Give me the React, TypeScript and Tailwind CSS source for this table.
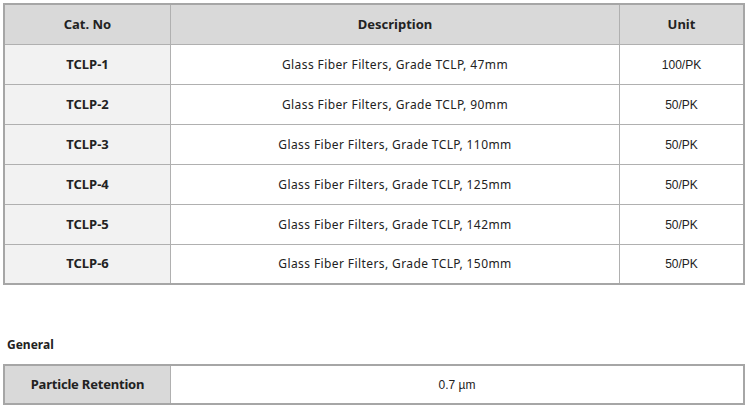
const rows = [
  { cat: "TCLP-1", desc: "Glass Fiber Filters, Grade TCLP, 47mm", unit: "100/PK" },
  { cat: "TCLP-2", desc: "Glass Fiber Filters, Grade TCLP, 90mm", unit: "50/PK" },
  { cat: "TCLP-3", desc: "Glass Fiber Filters, Grade TCLP, 110mm", unit: "50/PK" },
  { cat: "TCLP-4", desc: "Glass Fiber Filters, Grade TCLP, 125mm", unit: "50/PK" },
  { cat: "TCLP-5", desc: "Glass Fiber Filters, Grade TCLP, 142mm", unit: "50/PK" },
  { cat: "TCLP-6", desc: "Glass Fiber Filters, Grade TCLP, 150mm", unit: "50/PK" }
];

const font = "font-['Noto_Sans','Open_Sans',sans-serif]";
const arial = "font-['Liberation_Sans',Arial,sans-serif]";

export default function App() {
  return (
    <div className={`w-[748px] h-[408px] bg-white text-[#222] ${font}`}>
      <div className="pt-[3px] px-[3px]">
        <div className="border-2 border-[#a6a6a6]">
          <div className="flex h-[39px] bg-[#d9d9d9] text-[13px] font-bold">
            <div className="w-[165px] flex items-center justify-center">Cat. No</div>
            <div className="w-[449px] border-l border-[#b0b0b0] flex items-center justify-center">Description</div>
            <div className="flex-1 border-l border-[#b0b0b0] flex items-center justify-center">Unit</div>
          </div>
          {rows.map((r, i) => (
            <div
              key={r.cat}
              className={`flex border-t border-[#b0b0b0] ${i === rows.length - 1 ? "h-[39px]" : "h-[40px]"}`}
            >
              <div className="w-[165px] bg-[#f2f2f2] flex items-center justify-center text-[13px] font-bold">
                {r.cat}
              </div>
              <div className="w-[449px] border-l border-[#b0b0b0] flex items-center justify-center text-[12px] tracking-[0.4px]">
                {r.desc}
              </div>
              <div className={`flex-1 border-l border-[#b0b0b0] flex items-center justify-center text-[12px] ${arial}`}>
                {r.unit}
              </div>
            </div>
          ))}
        </div>

        <div className="mt-[50px] pl-[4px] text-[12px] font-bold h-[20px] flex items-center">General</div>

        <div className="mt-[9px] border-2 border-[#a6a6a6] flex h-[41px]">
          <div className="w-[165px] bg-[#d9d9d9] flex items-center justify-center text-[13px] font-bold tracking-[-0.2px]">
            Particle Retention
          </div>
          <div className={`flex-1 border-l border-[#b0b0b0] flex items-center justify-center text-[12px] ${arial}`}>
            0.7 µm
          </div>
        </div>
      </div>
    </div>
  );
}
